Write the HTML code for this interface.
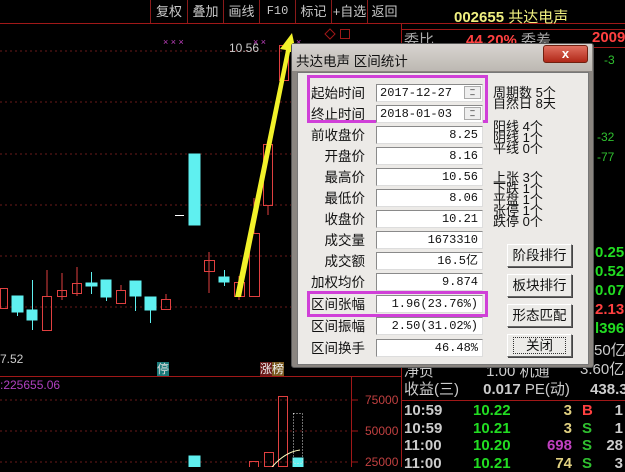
<!DOCTYPE html>
<html><head><meta charset="utf-8"><style>
*{margin:0;padding:0;box-sizing:border-box}
body{width:625px;height:467px;background:#000;position:relative;overflow:hidden;font-family:"Liberation Sans","Noto Sans CJK SC",sans-serif}
.a{position:absolute;white-space:nowrap}
.tb{position:absolute;top:0;height:23px;color:#c8c8c8;font-size:13px;line-height:23px;text-align:center;border-left:1px solid #8a1a1a}
.lbl{position:absolute;left:300px;width:65px;text-align:right;font-size:13.5px;color:#111;line-height:17px}
.fld{position:absolute;left:376px;width:107px;height:18px;background:#fff;border:1px solid #8a8a8a;border-right-color:#ddd;border-bottom-color:#ddd;font-family:"Liberation Mono","Noto Sans CJK SC",monospace;font-size:12px;line-height:16px;text-align:right;padding-right:4px;color:#111}
.btn{position:absolute;left:507px;width:65px;height:23px;background:#ecebe8;border:1px solid #666;border-top-color:#fff;border-left-color:#fff;box-shadow:1px 1px 0 #444;font-size:13.5px;line-height:21px;text-align:center;color:#111}
.rt{position:absolute;left:493px;font-size:13px;line-height:11px;color:#111}
.g{color:#22dd22;font-weight:bold}
</style></head><body>
<svg class="a" style="left:0;top:0" width="625" height="467">
<line x1="0" y1="23.5" x2="625" y2="23.5" stroke="#a01818"/>
<g stroke="#6a1a1a" stroke-dasharray="2,3">
<line x1="0" y1="51" x2="400" y2="51"/><line x1="0" y1="102" x2="400" y2="102"/><line x1="0" y1="154" x2="400" y2="154"/><line x1="0" y1="205" x2="400" y2="205"/><line x1="0" y1="256" x2="400" y2="256"/><line x1="0" y1="307" x2="400" y2="307"/>
<line x1="0" y1="400" x2="350" y2="400"/><line x1="0" y1="431" x2="350" y2="431"/><line x1="0" y1="462" x2="350" y2="462"/>
</g>
<line x1="401.5" y1="23" x2="401.5" y2="467" stroke="#a01818"/>
<line x1="0" y1="376.5" x2="402" y2="376.5" stroke="#a01818"/>
<line x1="351.5" y1="377" x2="351.5" y2="467" stroke="#a01818"/>
<line x1="402" y1="29.5" x2="625" y2="29.5" stroke="#a01818"/>
<line x1="402" y1="47.5" x2="625" y2="47.5" stroke="#a01818"/>
<line x1="402" y1="400.5" x2="625" y2="400.5" stroke="#a01818"/>
<g stroke="#a01818"><line x1="352" y1="400" x2="358" y2="400"/><line x1="352" y1="431" x2="358" y2="431"/><line x1="352" y1="462" x2="358" y2="462"/></g>
<g fill="none" stroke="#e04040">
<rect x="0.5" y="288.5" width="7" height="20"/><rect x="42.5" y="296.5" width="9" height="34"/><line x1="47" y1="270" x2="47" y2="296"/>
<rect x="57.5" y="290.5" width="9" height="6"/><line x1="62" y1="273" x2="62" y2="300"/>
<rect x="72.5" y="283.5" width="9" height="10"/><line x1="77" y1="267" x2="77" y2="296"/>
<rect x="116.5" y="290.5" width="9" height="13"/><line x1="121" y1="285" x2="121" y2="290"/>
<rect x="161.5" y="299.5" width="9" height="10"/><line x1="166" y1="294" x2="166" y2="299"/>
<rect x="204.5" y="260.5" width="10" height="11"/><line x1="209" y1="252" x2="209" y2="293"/>
<rect x="234.5" y="282.5" width="10" height="14"/><line x1="239" y1="276" x2="239" y2="300"/>
<rect x="249.5" y="233.5" width="10" height="63"/><line x1="254" y1="198" x2="254" y2="233"/>
<rect x="263.5" y="144.5" width="9" height="61"/><line x1="268" y1="205" x2="268" y2="215"/>
<rect x="279.5" y="45.5" width="9" height="35"/>
<rect x="278.5" y="396.5" width="9" height="70"/><rect x="264.5" y="452.5" width="9" height="14"/><rect x="249.5" y="461.5" width="9" height="6"/>
</g>
<g stroke="#5ff0f0" fill="#5ff0f0">
<rect x="12" y="296" width="11" height="16"/><line x1="17.5" y1="312" x2="17.5" y2="316"/>
<rect x="27" y="310" width="10" height="10"/><line x1="32.5" y1="280" x2="32.5" y2="330"/>
<rect x="86" y="283" width="11" height="3"/><line x1="91.5" y1="272" x2="91.5" y2="294"/>
<rect x="101" y="280" width="10" height="17"/><line x1="106.5" y1="297" x2="106.5" y2="301"/>
<rect x="130" y="281" width="11" height="15"/><line x1="135.5" y1="296" x2="135.5" y2="311"/>
<rect x="145" y="297" width="11" height="13"/><line x1="150.5" y1="310" x2="150.5" y2="323"/>
<rect x="189" y="154" width="11" height="71"/>
<rect x="219" y="277" width="10" height="5"/><line x1="224.5" y1="270" x2="224.5" y2="286"/>
<rect x="189" y="456" width="11" height="11"/><rect x="293" y="458" width="10" height="9"/>
</g>
<line x1="175" y1="215.5" x2="184" y2="215.5" stroke="#fff"/>
<rect x="293.5" y="413.5" width="9" height="50" fill="none" stroke="#ddd" stroke-dasharray="1,2"/>
<path d="M272 467 Q285 452 300 450" stroke="#ffffc0" fill="none"/>
<g fill="#c040c0" font-size="9" font-family="Liberation Sans"><text x="163" y="45">× × ×</text><text x="253" y="45">× ×</text><text x="296" y="45">×</text></g>
<path d="M325 34 l5 -5 l5 5 l-5 5z" fill="none" stroke="#a01818"/><rect x="340.5" y="29.5" width="9" height="9" fill="none" stroke="#a01818"/>
<polygon points="235,297 241,297 290,52 296,52 292,33 280,49 286,50" fill="#f2f22a"/>
</svg>
<div class="tb" style="left:150px;width:37px">复权</div>
<div class="tb" style="left:187px;width:36px">叠加</div>
<div class="tb" style="left:223px;width:36px">画线</div>
<div class="tb" style="left:259px;width:36px;font-family:'Liberation Mono';font-size:12px">F10</div>
<div class="tb" style="left:295px;width:36px">标记</div>
<div class="tb" style="left:331px;width:36px">+自选</div>
<div class="tb" style="left:367px;width:34px">返回</div>
<div class="a" style="left:229px;top:41px;color:#ccc;font-size:12px">10.56</div>
<div class="a" style="left:0;top:352px;color:#ccc;font-size:12px">7.52</div>
<div class="a" style="left:157px;top:362px;background:#1a7a7a;color:#ddd;font-size:12px;line-height:14px">停</div>
<div class="a" style="left:260px;top:362px;font-size:12px;line-height:14px"><span style="background:#6a1a1a;color:#eee">涨</span><span style="background:#7a5a20;color:#eee">榜</span></div>
<div class="a" style="left:0;top:378px;color:#b040c0;font-size:12px">:225655.06</div>
<div class="a" style="left:365px;top:393px;color:#c04040;font-size:12px">75000</div>
<div class="a" style="left:365px;top:424px;color:#c04040;font-size:12px">50000</div>
<div class="a" style="left:365px;top:455px;color:#c04040;font-size:12px">25000</div>
<div class="a" style="left:454px;top:6px;color:#f0f080;font-size:15px"><b>002655</b> 共达电声</div>
<div class="a" style="left:404px;top:29px;color:#aaa;font-size:15px">委比</div>
<div class="a" style="left:466px;top:29px;color:#ff4040;font-size:15px"><b>44.20%</b> <span style="color:#aaa">委差</span></div>
<div class="a" style="left:592px;top:29px;color:#ff4040;font-size:15px;font-weight:bold">2009</div>
<div class="a" style="left:604px;top:53px;color:#30c030;font-size:12px">-3</div>
<div class="a" style="left:597px;top:130px;color:#30c030;font-size:12px">-32</div>
<div class="a" style="left:597px;top:150px;color:#30c030;font-size:12px">-77</div>
<div class="a g" style="left:595px;top:244px;font-size:15px">0.25</div>
<div class="a g" style="left:595px;top:263px;font-size:15px">0.52</div>
<div class="a g" style="left:595px;top:282px;font-size:15px">0.07</div>
<div class="a" style="left:595px;top:301px;font-size:15px;color:#ff4040;font-weight:bold">2.13</div>
<div class="a g" style="left:595px;top:320px;font-size:15px">l396</div>
<div class="a" style="left:594px;top:339px;font-size:15px;color:#ccc">50亿</div>
<div class="a" style="left:580px;top:358px;font-size:15px;color:#ccc">3.60亿</div>
<div class="a" style="left:404px;top:360px;font-size:15px;color:#ccc">净负 <span style="margin-left:48px">1.00 机通</span></div>
<div class="a" style="left:404px;top:378px;font-size:15px;color:#ccc">收益(三) <span style="margin-left:20px;font-weight:bold">0.017</span> PE(动) <span style="margin-left:16px;font-weight:bold">438.3</span></div>
<div class="a" style="left:404px;top:402px;font-size:15px;line-height:17.6px;color:#ccc;font-weight:bold">10:59<br>10:59<br>11:00<br>11:00</div>
<div class="a g" style="left:473px;top:402px;font-size:15px;line-height:17.6px">10.22<br>10.21<br>10.20<br>10.21</div>
<div class="a" style="left:520px;top:402px;width:52px;text-align:right;font-size:15px;line-height:17.6px;font-weight:bold;color:#e0d080">3<br>3<br><span style="color:#c040c0">698</span><br>74</div>
<div class="a" style="left:582px;top:402px;font-size:15px;line-height:17.6px;font-weight:bold;color:#30c030"><span style="color:#ff4040">B</span><br>S<br>S<br>S</div>
<div class="a" style="left:596px;top:402px;width:27px;text-align:right;font-size:15px;line-height:17.6px;font-weight:bold;color:#ccc">1<br>1<br>28<br>3</div>

<div class="a" style="left:291px;top:43px;width:303px;height:325px;background:#8a8580;border:1px solid #555;border-radius:3px"></div>
<div class="a" style="left:292px;top:44px;width:300px;height:27px;background:linear-gradient(#d8d4d0,#bdb8b2)"></div>
<div class="a" style="left:296px;top:50px;font-size:13.5px;color:#111">共达电声 区间统计</div>
<div class="a" style="left:543px;top:45px;width:45px;height:18px;background:linear-gradient(#e07060,#b02818);border:1px solid #702010;border-radius:3px;color:#fff;font-weight:bold;font-size:13px;text-align:center;line-height:16px">x</div>
<div class="a" style="left:297px;top:72px;width:292px;height:293px;background:#eceae7;border:1px solid #777"></div>
<div class="a" style="left:307px;top:75px;width:181px;height:48px;border:3px solid #d040d8"></div>
<div class="a" style="left:307px;top:291px;width:181px;height:26px;border:3px solid #d040d8"></div>
<div class="lbl" style="top:85px">起始时间</div><div class="fld" style="top:84px;text-align:left;padding-left:3px">2017-12-27</div>
<div class="lbl" style="top:106px">终止时间</div><div class="fld" style="top:105px;text-align:left;padding-left:3px">2018-01-03</div>
<div class="a" style="left:464px;top:86px;width:17px;height:13px;border:1px solid #aaa;background:#eee;font-size:8px;line-height:5px;text-align:center">–<br>–</div>
<div class="a" style="left:464px;top:107px;width:17px;height:13px;border:1px solid #aaa;background:#eee;font-size:8px;line-height:5px;text-align:center">–<br>–</div>
<div class="lbl" style="top:127px">前收盘价</div><div class="fld" style="top:126px">8.25</div>
<div class="lbl" style="top:148px">开盘价</div><div class="fld" style="top:147px">8.16</div>
<div class="lbl" style="top:169px">最高价</div><div class="fld" style="top:168px">10.56</div>
<div class="lbl" style="top:190px">最低价</div><div class="fld" style="top:189px">8.06</div>
<div class="lbl" style="top:211px">收盘价</div><div class="fld" style="top:210px">10.21</div>
<div class="lbl" style="top:232px">成交量</div><div class="fld" style="top:231px">1673310</div>
<div class="lbl" style="top:253px">成交额</div><div class="fld" style="top:252px">16.5亿</div>
<div class="lbl" style="top:274px">加权均价</div><div class="fld" style="top:273px">9.874</div>
<div class="lbl" style="top:296px">区间张幅</div><div class="fld" style="top:295px">1.96(23.76%)</div>
<div class="lbl" style="top:318px">区间振幅</div><div class="fld" style="top:317px">2.50(31.02%)</div>
<div class="lbl" style="top:340px">区间换手</div><div class="fld" style="top:339px">46.48%</div>
<div class="rt" style="top:87px">周期数 5个<br>自然日 8天</div>
<div class="rt" style="top:121px">阳线 4个<br>阴线 1个<br>平线 0个</div>
<div class="rt" style="top:172px">上张 3个<br>下跌 1个<br>平盘 1个<br>张停 1个<br>跌停 0个</div>
<div class="btn" style="top:244px">阶段排行</div>
<div class="btn" style="top:274px">板块排行</div>
<div class="btn" style="top:304px">形态匹配</div>
<div class="btn" style="top:334px"><span style="border:1px dotted #333;padding:0 12px">关闭</span></div>
</body></html>
